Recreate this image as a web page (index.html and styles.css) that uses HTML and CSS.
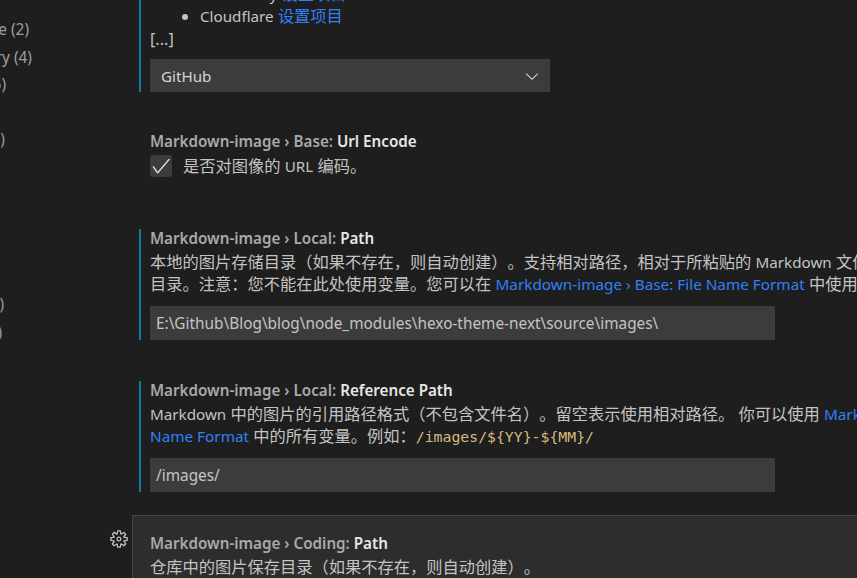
FILE: index.html
```html
<!DOCTYPE html>
<html lang="zh-CN">
<head>
    <meta charset="UTF-8">
    <meta name="viewport" content="width=device-width, initial-scale=1.0">
    <title>Settings</title>
    <link rel="stylesheet" href="styles.css">
</head>
<body>
    <div class="page">
        <nav class="toc">
            <div class="toc-row toc-r1">Compute (2)</div>
            <div class="toc-row toc-r2">Repository (4)</div>
            <div class="toc-row toc-r3">Tools (6)</div>
            <div class="toc-row toc-empty"></div>
            <div class="toc-row toc-r4">Editor (3)</div>
            <div class="toc-row toc-empty"></div>
            <div class="toc-row toc-empty"></div>
            <div class="toc-row toc-empty"></div>
            <div class="toc-row toc-empty"></div>
            <div class="toc-row toc-empty"></div>
            <div class="toc-row toc-r5">Preview (7)</div>
            <div class="toc-row toc-r6">Themes (1)</div>
        </nav>

        <main class="list">
            <section class="setting modified">
                <ul class="desc-list">
                    <li><span class="en">Cloudinary</span> <a class="link">设置项目</a></li>
                    <li><span class="en">Cloudflare</span> <a class="link">设置项目</a></li>
                </ul>
                <div class="desc">[...]</div>
                <div class="select">
                    <span class="en">GitHub</span>
                    <svg class="chevron" width="20" height="20" viewBox="0 0 16 16"><path fill="#ccc" fill-rule="evenodd" d="M7.976 10.072l4.357-4.357.62.618L8.285 11h-.618L3 6.333l.62-.618 4.356 4.357z"/></svg>
                </div>
            </section>

            <section class="setting plain">
                <div class="title">Markdown-image › Base: <b>Url Encode</b></div>
                <label class="check-row">
                    <span class="checkbox">
                        <svg width="22" height="22" viewBox="0 0 16 16"><path fill="#e8e8e8" fill-rule="evenodd" d="M14.431 3.323l-8.47 10-.79-.036-3.35-4.77.818-.574 2.978 4.24 8.051-9.506.764.646z"/></svg>
                    </span>
                    <span>是否对图像的 <span class="en">URL</span> 编码。</span>
                </label>
            </section>

            <section class="setting modified">
                <div class="title">Markdown-image › Local: <b>Path</b></div>
                <div class="desc">本地的图片存储目录（如果不存在，则自动创建）。支持相对路径，相对于所粘贴的 <span class="en">Markdown</span> 文件的</div>
                <div class="desc">目录。注意：您不能在此处使用变量。您可以在 <a class="link en">Markdown-image › Base: File Name Format</a> 中使用变量。</div>
                <div class="input">E:\Github\Blog\blog\node_modules\hexo-theme-next\source\images\</div>
            </section>

            <section class="setting modified">
                <div class="title">Markdown-image › Local: <b>Reference Path</b></div>
                <div class="desc"><span class="en">Markdown</span> 中的图片的引用路径格式（不包含文件名）。留空表示使用相对路径。 你可以使用 <a class="link en">Markdown-image › Base: File</a></div>
                <div class="desc"><a class="link en">Name Format</a> 中的所有变量。例如：<code>/images/${YY}-${MM}/</code></div>
                <div class="input">/images/</div>
            </section>

            <section class="setting hovered">
                <svg class="gear" width="20" height="20" viewBox="0 0 16 16"><path fill="#c5c5c5" fill-rule="evenodd" d="M9.1 4.4L8.6 2H7.4l-.5 2.4-.7.3-2-1.3-.9.8 1.3 2-.2.7-2.4.5v1.2l2.4.5.3.8-1.3 2 .8.8 2-1.3.8.3.4 2.3h1.2l.5-2.4.8-.3 2 1.3.8-.8-1.3-2 .3-.8 2.3-.4V7.4l-2.4-.5-.3-.8 1.3-2-.8-.8-2 1.3-.7-.2zM9.4 1l.5 2.4L12 2.1l2 2-1.4 2.1 2.4.4v2.8l-2.4.5L14 12l-2 2-2.1-1.4-.5 2.4H6.6l-.5-2.4L4 13.9l-2-2 1.4-2.1L1 9.4V6.6l2.4-.5L2.1 4l2-2 2.1 1.4.4-2.4h2.8zm.6 7c0 1.1-.9 2-2 2s-2-.9-2-2 .9-2 2-2 2 .9 2 2zM8 9c.6 0 1-.4 1-1s-.4-1-1-1-1 .4-1 1 .4 1 1 1z"/></svg>
                <div class="title">Markdown-image › Coding: <b>Path</b></div>
                <div class="desc">仓库中的图片保存目录（如果不存在，则自动创建）。</div>
            </section>
        </main>
    </div>
</body>
</html>
```

FILE: styles.css
```css
html, body {
    margin: 0;
    height: 100%;
    overflow: hidden;
}
body {
    background-color: #1e1e1e;
    color: #c4c4c4;
    font-family: "Noto Sans", "Noto Sans CJK SC", sans-serif;
    font-size: 16.25px;
    line-height: 22px;
    text-spacing-trim: space-all;
}
.page {
    display: flex;
    height: 578px;
    overflow: hidden;
}
.toc {
    width: 132px;
    flex: none;
    overflow: hidden;
    padding-top: 16px;
    color: #9d9d9d;
    font-size: 15.4px;
}
.toc-row {
    height: 27.5px;
    line-height: 27.5px;
    white-space: nowrap;
    display: flex;
    justify-content: flex-end;
    width: 40px;
}
.toc-r1 { width: 29px; }
.toc-r2 { width: 32px; }
.toc-r3 { width: 6px; }
.toc-r4 { width: 5px; }
.toc-r5 { width: 4px; }
.toc-r6 { width: 2px; }
.list {
    flex: 1;
    min-width: 0;
    margin-top: -17px;
}
.en {
    font-size: 15.2px;
}
.link.en {
    font-size: 15.3px;
}
.setting {
    white-space: nowrap;
    position: relative;
}
.modified {
    margin-left: 7px;
    padding-left: 9px;
    border-left: 2px solid #0e7ba6;
}
.plain {
    margin-left: 18px;
    margin-top: 40px;
}
.modified + .modified {
    margin-top: 41px;
}
.plain + .modified {
    margin-top: 52px;
}
.title {
    color: #a9a9a9;
    font-weight: 600;
    font-size: 15.2px;
    line-height: 18px;
    height: 18px;
    margin-bottom: 4px;
}
.title b {
    color: #e7e7e7;
    font-weight: 600;
}
.desc {
    height: 22px;
}
.desc-list {
    margin: 0 0 1px;
    padding-left: 50px;
}
.link {
    color: #2f81f7;
}
code {
    font-family: "DejaVu Sans Mono", monospace;
    font-size: 14.8px;
    color: #d7ba7d;
}
.select {
    margin-top: 9px;
    width: 400px;
    height: 33px;
    background-color: #3c3c3c;
    color: #d4d4d4;
    display: flex;
    align-items: center;
    justify-content: space-between;
    padding: 0 8px 0 11px;
    box-sizing: border-box;
}
.chevron {
    flex: none;
}
.input {
    margin-top: 11px;
    width: 625px;
    height: 34px;
    line-height: 36px;
    font-size: 15.36px;
    background-color: #3c3c3c;
    color: #c4c4c4;
    padding-left: 6px;
    box-sizing: border-box;
}
.check-row {
    display: flex;
    align-items: center;
    gap: 11px;
    margin-top: -1px;
    padding-top: 2px;
}
.checkbox {
    width: 22px;
    height: 22px;
    background-color: #3c3c3c;
    border-radius: 3px;
    flex: none;
}
.checkbox svg {
    display: block;
}
.hovered {
    margin-top: 23px;
    height: 80px;
    padding: 18px 0 0 17px;
    background-color: #2d2d2d;
    border-top: 1px solid #454545;
    border-left: 1px solid #454545;
}
.gear {
    position: absolute;
    left: -24px;
    top: 13px;
}
```
